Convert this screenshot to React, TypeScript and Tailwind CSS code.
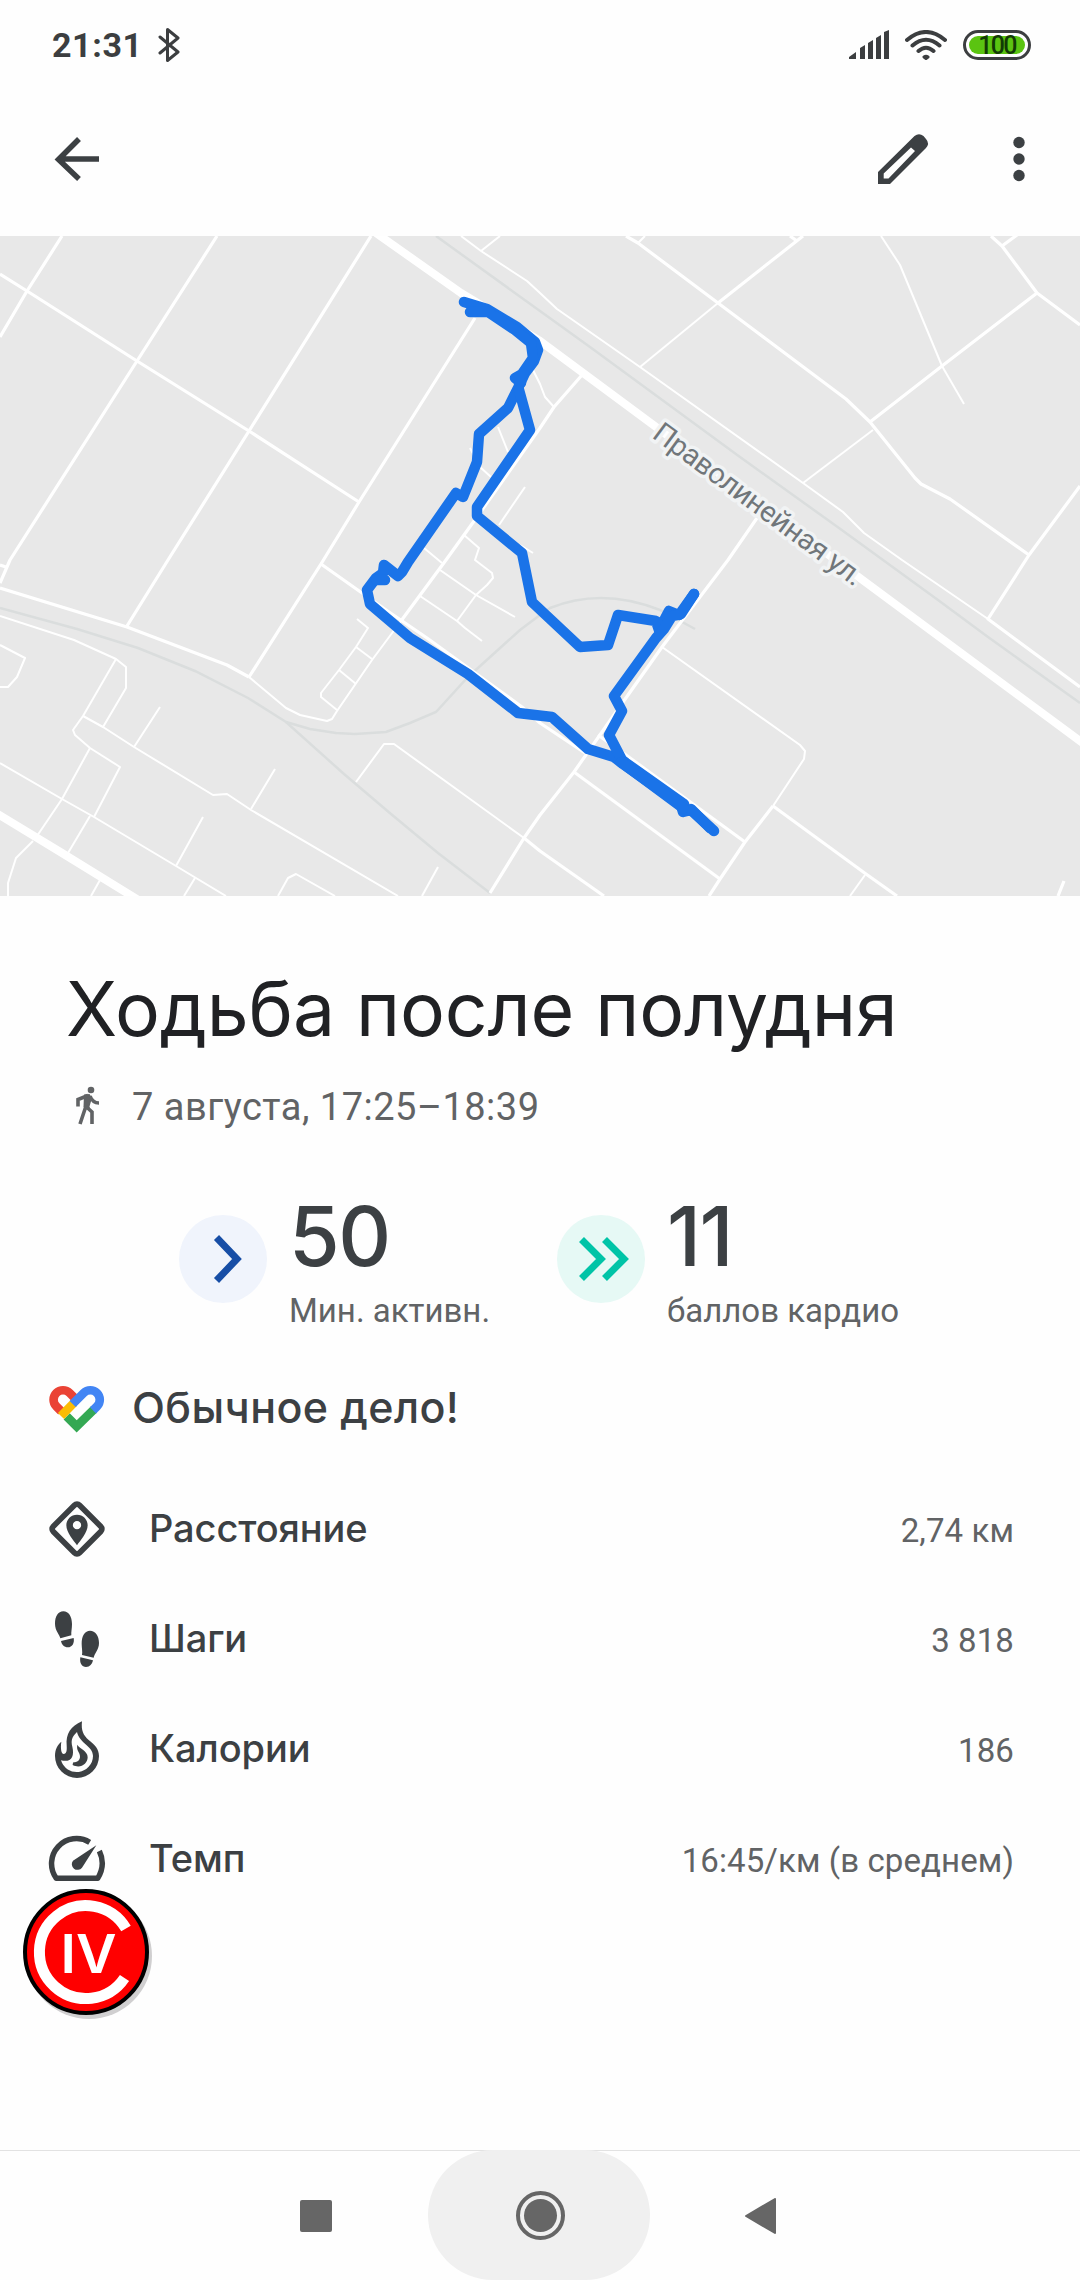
import React from "react";

const roads = {
  wide: [
    "M376 233L461 293L540 341L1084 744",
    "M-4 813L62 853L140 901",
  ],
  medium: [
    "M62 236L27 291L0 337",
    "M217 236L137 361L10 560L0 583",
    "M371 236L249 431L168 560L127 626",
    "M475 318L359 502L321 564L249 677",
    "M0 274L27 291L137 361L249 431L359 502",
    "M626 236L638 243L718 303L846 399L870 422L915 478L921 484L950 499L1029 555",
    "M803 236L718 303",
    "M790 236L797 241",
    "M991 236L1002 246L1037 293L1080 325",
    "M1002 246L1017 235",
    "M1037 293L942 366L870 422",
    "M1080 486L1029 555L988 619L1080 687",
    "M582 375L554 407L540 428L482 510L464 535L446 560L401 621",
    "M321 564L362 593L389 612L427 638L522 707L540 723L585 753",
    "M598 735L626 755L745 842",
    "M0 588L127 627L227 665L249 677",
    "M0 565L6 567",
    "M490 893L524 838L540 815L574 772L616 712L662 647L728 560L757 518",
    "M574 772L720 879",
    "M773 806L745 842L720 879L709 896",
    "M773 806L866 874L897 896",
    "M524 838L540 851L604 896",
    "M1064 881L1058 896",
  ],
  narrow: [
    "M461 236L481 251L527 281L540 293L557 309L640 367L803 483L843 512L864 533L902 560L988 619",
    "M481 251L500 236",
    "M638 243L645 236",
    "M718 303L640 367",
    "M881 236L900 265L942 366L964 404",
    "M873 430L803 483",
    "M533 370L540 384L545 397L554 407",
    "M498 427L508 452",
    "M470 448L480 467L491 477",
    "M525 487L499 525",
    "M520 545L533 553",
    "M464 535L479 548L475 560L492 573L493 578L487 585L476 595L457 621",
    "M424 548L442 563M440 570L476 595L515 617",
    "M420 596L457 621L465 628L482 641",
    "M401 621L372 660L337 711L332 719L327 721L300 715L286 708L249 677",
    "M357 619L368 628L356 647L339 670L321 693L321 697L337 710",
    "M356 647L372 659M339 670L356 684",
    "M0 616L74 640L116 659L126 667L126 688L103 727",
    "M116 659L83 716L73 730L75 735L90 748L120 767L94 817",
    "M90 748L62 799L37 836",
    "M83 716L103 727L134 747L213 795L227 794L251 810L398 896",
    "M134 747L160 707M251 809L275 769",
    "M0 763L62 799L94 817L176 866L226 896",
    "M176 866L203 817M90 816L68 853M195 878L184 896M100 880L91 896",
    "M33 841L16 858L8 883L8 896",
    "M0 645L25 658L17 677L8 687L0 687",
    "M278 896L288 878L296 874L335 896",
    "M422 896L438 867",
    "M356 782L384 744L394 744L524 838",
    "M662 647L800 745L805 751L804 759L773 806",
    "M865 875L850 896",
  ],
};

const rails = [
  "M436 236L540 311L590 347L740 457L839 528L938 600L988 637L1080 703",
  "M0 608L77 629L138 648L195 671L248 698L286 722L344 774L391 814L438 853L490 893",
  "M286 722L310 729L336 733L355 734L386 732L410 723L436 712L468 677L520 630L540 615L550 608Q602 587 660 610L695 629",
];

const track = [
  "M464 302L487 309L517 327L535 342L538 350L534 361L525 373L518 388L508 408L479 434L477 462L463 497L456 493L408 562L402 572L398 576L384 565L383 573L376 578L367 590L370 604L410 638L468 674L518 713L552 717L588 749L614 757L623 764L681 805L683 812L691 810L714 831",
  "M470 312L488 312L515 330L531 343L533 358L522 374L515 378L521 383",
  "M519 390L530 430L477 507L477 516L522 553L532 602L580 647L608 645L618 615L656 621L659 630L669 611L679 615L694 594",
  "M694 594L681 614L672 616L664 629L656 638L614 696L622 711L609 735L622 760L626 763L684 804",
  "M376 580L385 580M691 809L710 828",
  "M621 762L683 808",
];

function RouteMap() {
  return (
    <svg className="block h-[660px] w-full shrink-0 bg-[#e8e8e8]" viewBox="0 236 1080 660" fill="none">
      <g stroke="#dadddd" strokeWidth="2.500">
        {rails.map((d) => <path key={d} d={d} />)}
      </g>
      <g stroke="#fff" strokeLinejoin="round">
        <g strokeWidth="2">{roads.narrow.map((d) => <path key={d} d={d} />)}</g>
        <g strokeWidth="3.2">{roads.medium.map((d) => <path key={d} d={d} />)}</g>
        <g strokeWidth="8">{roads.wide.map((d) => <path key={d} d={d} />)}</g>
      </g>
      <text
        transform="translate(651 437) rotate(36.4)"
        textLength="253"
        className="font-[Roboto,sans-serif] text-[29px]"
        fill="#70767a"
        stroke="#f1f3f4"
        strokeWidth="7"
        strokeLinejoin="round"
        paintOrder="stroke"
      >
        Праволинейная ул.
      </text>
      <g stroke="#1a73e8" strokeWidth="10.500" strokeLinecap="round" strokeLinejoin="round">
        {track.map((d) => <path key={d} d={d} />)}
      </g>
    </svg>
  );
}

function StatusBar() {
  return (
    <div className="flex h-[90px] shrink-0 items-center pr-[49px] pl-[52px] text-[#3c3e40]">
      <span className="w-[106px] text-[34px] leading-none font-bold tracking-[0.6px]">21:31</span>
      <svg width="22" height="34" viewBox="0 0 22 34" fill="none" stroke="currentColor" strokeWidth="3" strokeLinejoin="round" strokeLinecap="round">
        <path d="M2 9L20 24L9.500 32.500V1.500L20 10L2 25" />
      </svg>
      <div className="ml-auto flex items-center">
        <svg width="40" height="30" viewBox="0 0 40 30" fill="currentColor">
          <path d="M0 27l7-5v7H0zM11 18l5-3v14h-5zM19 13l5-3v19h-5zM27 8l5-3v24h-5zM35 2l5-2v29h-5z" />
        </svg>
        <svg className="ml-4" width="42" height="30" viewBox="0 0 42 30" fill="none" stroke="currentColor" strokeWidth="4" strokeLinecap="round">
          <path d="M2 10Q21-6 40 10M7.500 15.500Q21 4 34.500 15.500M13.500 21Q21 14.500 28.500 21" />
          <path d="M19 27Q21 25.500 23 27L21 28.500Z" strokeWidth="3" strokeLinejoin="round" />
        </svg>
        <div className="ml-4 flex h-[30px] w-[68px] items-center rounded-full border-3 border-[#3c3e40] p-[3px]">
          <div className="flex h-[18px] w-full items-center justify-center rounded-full bg-[#5bc411]">
            <span className="text-[25px] leading-none font-medium tracking-[-1.7px] text-[#123a05]">100</span>
          </div>
        </div>
      </div>
    </div>
  );
}

function AppBar() {
  return (
    <div className="flex h-[146px] shrink-0 items-center pr-[31px] pb-2 pl-[47px] text-[#3c4043]">
      <svg width="60" height="60" viewBox="0 0 60 60" fill="none" stroke="currentColor" strokeWidth="5.500">
        <path d="M32 10L11.500 30.500L32 50M11 30H52" />
      </svg>
      <svg className="ml-auto" width="60" height="60" viewBox="873 129 60 60" fill="currentColor">
        <path
          fillRule="evenodd"
          d="M878 172L914.500 136Q919 132.500 923.500 136L926 139Q930 143.500 926 148L890 184H878ZM883.700 173.500V178.500H888.500L915 151L911 147.500Z"
        />
      </svg>
      <svg className="ml-[56px]" width="60" height="60" viewBox="0 0 60 60" fill="currentColor">
        <circle cx="30" cy="13.500" r="5.700" />
        <circle cx="30" cy="30" r="5.700" />
        <circle cx="30" cy="46.500" r="5.700" />
      </svg>
    </div>
  );
}

function Score({ value, label, tint, children }: { value: string; label: string; tint: string; children: React.ReactNode }) {
  return (
    <div className="flex w-[378px] items-start">
      <div className={`mt-[19px] mr-[22px] flex size-[88px] items-center justify-center rounded-full ${tint}`}>{children}</div>
      <div className="whitespace-nowrap">
        <div className="font-[Inter,sans-serif] text-[82px] leading-[82px] font-medium tracking-[-1.5px] text-[#3c4043]">{value}</div>
        <div className="mt-[13px] text-[33px] leading-10 text-[#616365]">{label}</div>
      </div>
    </div>
  );
}

const metrics = [
  {
    label: "Расстояние",
    value: "2,74 км",
    icon: (
      <svg width="60" height="60" viewBox="141 417 180 180" fill="none">
        <rect x="175" y="451" width="112" height="112" rx="11" transform="rotate(45 231 507)" stroke="currentColor" strokeWidth="17" />
        <path fill="currentColor" fillRule="evenodd" d="M231 464C213 464 199 478 199 496C199 518 221 542 231 556C241 542 263 518 263 496C263 478 249 464 231 464ZM231 483A12.500 12.500 0 1 1 231 508A12.500 12.500 0 1 1 231 483Z" />
      </svg>
    ),
  },
  {
    label: "Шаги",
    value: "3 818",
    icon: (
      <svg width="60" height="60" viewBox="141 747 180 180" fill="currentColor">
        <path d="M190 754c16 0 26 16 26 38 0 14-3 24-2 34l-33 9c-1-10-16-22-16-44 0-22 9-37 25-37zM183 843l38-9c3 16-5 28-17 28-12 0-19-8-21-19z" />
        <path d="M270 812c16 0 27 15 27 37 0 20-14 32-16 44l-35-8c2-10-1-22-1-34 0-24 10-39 25-39zM241 892l38 9c-3 12-9 20-21 20-12 0-20-11-17-29z" />
      </svg>
    ),
  },
  {
    label: "Калории",
    value: "186",
    icon: (
      <svg width="60" height="60" viewBox="141 27 180 180" fill="currentColor">
        <path
          fillRule="evenodd"
          d="M246 34C243 62 250 76 266 90C284 104 297 117 297 138A66 66 0 0 1 165 138C165 118 172 105 184 95C181 115 184 132 191 132C200 132 201 122 200 106C197 72 212 48 246 34ZM231 66C214 82 213 93 217 110C224 140 214 158 183 151A49 49 0 0 0 279 138C279 108 238 100 231 66Z"
        />
        <path d="M232 104c6 12 31 18 31 38 0 20-22 35-45 23 0-4 1-5 2-8 12 0 19-6 20-16 1-14-12-18-8-37z" />
      </svg>
    ),
  },
  {
    label: "Темп",
    value: "16:45/км (в среднем)",
    icon: (
      <svg width="60" height="60" viewBox="141 357 180 180" fill="none">
        <path d="M269 397A75 75 0 0 0 169 505H293Q318 464 298 423" stroke="currentColor" strokeWidth="16.500" strokeLinejoin="round" />
        <path fill="currentColor" d="M289 406L246 473A16.500 16.500 0 1 1 219 452Z" />
      </svg>
    ),
  },
];

export default function App() {
  return (
    <div className="relative flex h-[2280px] w-[1080px] flex-col overflow-hidden bg-[#fefefe] font-[Roboto,sans-serif]">
      <StatusBar />
      <AppBar />
      <RouteMap />

      <h1 className="mt-[67px] pl-[66px] font-[Inter,sans-serif] text-[75px] leading-[92px] whitespace-nowrap tracking-[-0.1px] text-[#202124]">
        Ходьба после полудня
      </h1>
      <div className="mt-[30px] flex h-11 items-center pl-[66px] text-[#616365]">
        <svg className="mr-[26px] mb-1" width="40" height="40" viewBox="0 0 40 40" fill="none" stroke="currentColor" strokeWidth="3.600">
          <circle cx="25" cy="5" r="3.300" fill="currentColor" stroke="none" />
          <path d="M18 9.500L23.500 9L26 13L23.500 21.500L24 25L17.500 22Z" fill="currentColor" stroke="none" />
          <path d="M22 10.500L12 14.500V21.500M24 11Q26.500 18 33 18M20 21L14 39M20 21.500L26 27V39" />
        </svg>
        <span className="text-[38px] leading-[44px] tracking-[0.5px]">7 августа, 17:25–18:39</span>
      </div>

      <div className="mt-[67px] flex pl-[179px]">
        <Score value="50" label="Мин. активн." tint="bg-[#f0f4fc]">
          <svg width="88" height="88" viewBox="0 0 88 88" fill="none" stroke="#174ea6" strokeWidth="7">
            <path d="M37.500 22.500L58 44L37.500 65.500" />
          </svg>
        </Score>
        <Score value="11" label="баллов кардио" tint="bg-[#e6f9f5]">
          <svg width="88" height="88" viewBox="0 0 88 88" fill="none" stroke="#00c4a7" strokeWidth="7">
            <path d="M24.500 24.500L44 44L24.500 63.500M47.500 24.500L67 44L47.500 63.500" />
          </svg>
        </Score>
      </div>

      <div className="mt-12 flex h-[60px] items-center pl-[47px]">
        <svg width="60" height="60" viewBox="141 57 180 180" fill="none" strokeWidth="26">
          <path d="M234 124L209 99A28 28 0 0 0 169 139L184 154" stroke="#ea4335" />
          <path d="M200 169L230 199L282 148" stroke="#34a853" />
          <path d="M222 128L183 168" stroke="#fbbc04" />
          <path d="M218 132L251 99A28 28 0 0 1 291 139L279 151" stroke="#4285f4" />
        </svg>
        <span className="mb-[3px] ml-[25px] font-[Inter,sans-serif] text-[43px] leading-none font-medium tracking-[0.4px] whitespace-nowrap text-[#3c4043]">
          Обычное дело!
        </span>
      </div>

      <ul className="mt-[35px] pr-[66px] pl-[47px]">
        {metrics.map(({ label, value, icon }) => (
          <li key={label} className="flex h-[110px] items-center text-[#3c4043]">
            {icon}
            <span className="mb-0.5 ml-[42px] font-[Inter,sans-serif] text-[38px] leading-none font-medium tracking-[-0.1px]">{label}</span>
            <span className="mt-0.5 ml-auto text-[33px] leading-none tracking-[0.1px] text-[#616365]">{value}</span>
          </li>
        ))}
      </ul>

      {/* floating stamp */}
      <svg className="absolute top-[1885px] left-5" width="136" height="136" viewBox="20 1885 136 136">
        <circle cx="89" cy="1956" r="63" fill="#d0cfd0" />
        <circle cx="86" cy="1952" r="61" fill="#f00" stroke="#000" strokeWidth="4" />
        <path d="M126 1928.500A46.500 46.500 0 1 0 124.500 1978" fill="none" stroke="#fff" strokeWidth="11" />
        <text x="88.500" y="1973" textAnchor="middle" textLength="56" lengthAdjust="spacingAndGlyphs" className="font-[Inter,sans-serif] text-[54px] font-semibold" fill="#fff">
          IV
        </text>
      </svg>

      <nav className="mt-auto flex h-[130px] shrink-0 items-center border-t border-[#e2e2e2] pl-[300px]">
        <div className="size-8 rounded-xs bg-[#666]" />
        <div className="-mt-px ml-24 flex h-[130px] w-[222px] items-center justify-center rounded-full bg-[#f0f0f0] pl-0.5">
          <div className="flex size-[49px] items-center justify-center rounded-full border-4 border-[#666]">
            <div className="size-[33px] rounded-full bg-[#666]" />
          </div>
        </div>
        <svg className="ml-[95px]" width="31" height="36" viewBox="0 0 31 36" fill="#666" stroke="#666" strokeWidth="2" strokeLinejoin="round">
          <path d="M1 18L30 1V35Z" />
        </svg>
      </nav>
    </div>
  );
}
